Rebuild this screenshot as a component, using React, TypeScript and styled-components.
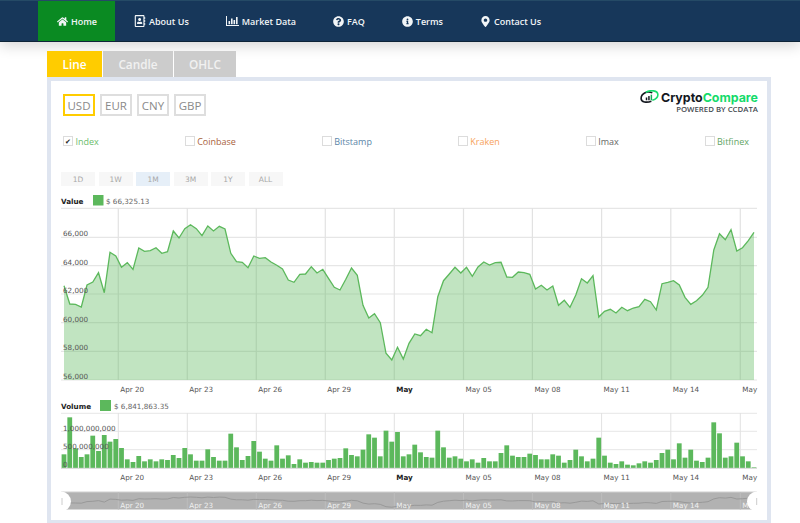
import styled, { createGlobalStyle } from "styled-components";
import {
    FaHome,
    FaRegAddressBook,
    FaQuestionCircle,
    FaInfoCircle,
    FaMapMarkerAlt,
} from "react-icons/fa";

const GlobalStyle = createGlobalStyle`
    html, body {
        margin: 0;
        height: 523px;
        overflow: hidden;
        background: #fff;
        font-family: "Open Sans", "Liberation Sans", sans-serif;
    }
`;

const Header = styled.header`
    height: 40px;
    padding-left: 38px;
    display: flex;
    background: #17375a;
    border-top: 1px solid #254a66;
    border-bottom: 1px solid #0e2438;
    box-shadow: 0 4px 14px rgba(0, 0, 0, 0.16);
`;

const NavItem = styled.a<{ $active?: boolean }>`
    display: flex;
    align-items: center;
    gap: 3px;
    padding: 0 18px 0 19px;
    color: #f2f5f7;
    font-size: 9px;
    font-weight: 600;
    background: ${(p) => (p.$active ? "#0a8a22" : "transparent")};
`;

const Main = styled.main`
    width: 724px;
    margin: 9px 0 0 47px;
`;

const Tabs = styled.div`
    display: flex;
    gap: 1px;
    height: 26px;
`;

const Tab = styled.div<{ $active?: boolean; $width: number }>`
    width: ${(p) => p.$width}px;
    display: flex;
    align-items: center;
    justify-content: center;
    font-size: 11.8px;
    font-weight: 600;
    color: ${(p) => (p.$active ? "#fff" : "#f1f1f1")};
    background: ${(p) => (p.$active ? "#ffcc00" : "#cccccc")};
`;

const Card = styled.section`
    height: 439px;
    border: solid #dfe5f0;
    border-width: 4px 4px 3px;
    background: #fff;
`;

const TopRow = styled.div`
    display: flex;
    justify-content: space-between;
    padding: 13px 9px 0 12px;
`;

const Currencies = styled.div`
    display: flex;
    gap: 5px;
`;

const Currency = styled.div<{ $active?: boolean }>`
    box-sizing: border-box;
    width: 32px;
    height: 22px;
    display: flex;
    align-items: center;
    justify-content: center;
    font-size: 11.5px;
    color: #8a8a8a;
    border: 2px solid ${(p) => (p.$active ? "#ffcc00" : "#dedede")};
`;

const Logo = styled.div`
    display: flex;
    flex-direction: column;
    align-items: flex-end;
    margin-top: -4px;
`;

const LogoMain = styled.div`
    display: flex;
    align-items: center;
    gap: 2px;
    height: 14px;
    font-family: Inter, "Open Sans", sans-serif;
    font-size: 12.4px;
    font-weight: 700;
    color: #14181f;
`;

const LogoGreen = styled.span`
    color: #15db6b;
`;

const LogoSub = styled.div`
    font-size: 7.8px;
    font-weight: 600;
    line-height: 10px;
    color: #444a50;
`;

const Exchanges = styled.div`
    display: flex;
    justify-content: space-between;
    margin: 18px 18px 0 12px;
`;

const Exchange = styled.label<{ $color: string }>`
    display: flex;
    align-items: center;
    gap: 2.5px;
    height: 14px;
    font-size: 9px;
    color: ${(p) => p.$color};
`;

const CheckBox = styled.span`
    box-sizing: border-box;
    width: 10px;
    height: 10px;
    display: flex;
    align-items: center;
    justify-content: center;
    border: 1px solid #dcdcdc;
    font-size: 7px;
    line-height: 1;
    color: #222;
`;

const Ranges = styled.div`
    display: flex;
    gap: 3.5px;
    margin: 24px 0 0 10px;
`;

const RangeButton = styled.div<{ $active?: boolean }>`
    width: 34px;
    height: 14px;
    display: flex;
    align-items: center;
    justify-content: center;
    font-family: "DejaVu Sans", sans-serif;
    font-size: 7.5px;
    color: #a8a8a8;
    background: ${(p) => (p.$active ? "#e6eff8" : "#f7f7f7")};
`;

const ChartSvg = styled.svg`
    display: block;
    margin-top: 4px;
    font-family: "DejaVu Sans", sans-serif;
    font-size: 7.2px;
    fill: #555;
`;

// traced from the reference at 3x, see toLineY / toBarY
const LINE = [
    287, 342, 343, 351, 285, 276, 248, 308, 187, 198, 232, 218, 238, 174, 184, 182, 173, 190, 185, 123, 144,
    116, 104, 116, 137, 108, 123, 109, 117, 190, 215, 217, 233, 198, 205, 203, 216, 226, 237, 270, 277, 253,
    252, 230, 249, 238, 265, 292, 300, 268, 234, 256, 346, 384, 371, 398, 490, 510, 472, 507, 460, 432, 437,
    418, 428, 320, 272, 252, 232, 249, 232, 259, 231, 216, 225, 218, 217, 261, 262, 246, 248, 253, 297, 286,
    300, 288, 346, 331, 352, 315, 266, 279, 257, 381, 364, 358, 369, 352, 362, 354, 350, 328, 335, 360, 281,
    277, 272, 285, 322, 343, 332, 316, 292, 180, 131, 149, 119, 183, 173, 152, 127,
];

const BARS = [
    223, 112, 205, 231, 223, 167, 213, 165, 185, 177, 204, 238, 246, 228, 244, 238, 244, 238, 240, 225, 234,
    204, 223, 242, 242, 208, 231, 242, 242, 161, 202, 240, 228, 183, 215, 236, 242, 196, 236, 226, 252, 238,
    248, 246, 248, 248, 240, 236, 234, 205, 225, 229, 209, 163, 173, 229, 152, 185, 156, 229, 223, 194, 217,
    231, 233, 152, 202, 233, 229, 236, 244, 238, 248, 234, 244, 244, 219, 196, 227, 231, 231, 221, 225, 238,
    238, 223, 227, 248, 240, 209, 229, 244, 236, 173, 227, 248, 252, 244, 254, 256, 250, 244, 248, 240, 219,
    209, 238, 190, 233, 209, 242, 246, 233, 127, 160, 233, 229, 188, 229, 244, 262,
];

const toX = (i: number) => 64 + (i * 690) / 120;
const toLineY = (z: number) => 190 + z / 3;
const toBarY = (z: number) => 380 + z / 3;
const toNavY = (z: number) => 497 + ((toLineY(z) - 225) / 145) * 11;

const linePoints = LINE.map((z, i) => `${toX(i).toFixed(1)},${toLineY(z).toFixed(1)}`).join(" ");
const navPoints = LINE.map((z, i) => `${toX(i).toFixed(1)},${toNavY(z).toFixed(1)}`).join(" ");

const TICKS = [
    { x: 118.3, label: "Apr 20" },
    { x: 187.3, label: "Apr 23" },
    { x: 256.3, label: "Apr 26" },
    { x: 325.3, label: "Apr 29" },
    { x: 394.3, label: "May", bold: true },
    { x: 463.5, label: "May 05" },
    { x: 532.4, label: "May 08" },
    { x: 601.6, label: "May 11" },
    { x: 670.8, label: "May 14" },
    { x: 740.3, label: "May" },
];

const VALUE_GRID = [208.3, 237.3, 265.7, 294, 322.7, 351.3];
const VALUE_LABELS = [
    { y: 236, label: "66,000" },
    { y: 265, label: "64,000" },
    { y: 293, label: "62,000" },
    { y: 322, label: "60,000" },
    { y: 350, label: "58,000" },
    { y: 379, label: "56,000" },
];
const VOLUME_GRID = [413.3, 431.3, 449.7];

function Chart() {
    return (
        <ChartSvg width={716} height={330} viewBox="51 190 716 330">
            <defs>
                <clipPath id="plot">
                    <rect x={61} y={190} width={696} height={330} />
                </clipPath>
            </defs>

            <text x={61} y={204} fontWeight="bold" fill="#222">Value</text>
            <rect x={93} y={195} width={10.5} height={10.5} fill="#5cb85c" />
            <text x={106} y={204} fill="#666">$ 66,325.13</text>

            {VALUE_GRID.map((y) => (
                <line key={y} x1={61} x2={757} y1={y} y2={y} stroke="#e6e6e6" strokeWidth={1.2} />
            ))}
            <line x1={61} x2={757} y1={380} y2={380} stroke="#e6e6e6" strokeWidth={1.2} />
            {TICKS.map((t) => (
                <line key={t.x} x1={t.x} x2={t.x} y1={208} y2={380} stroke="#e2e2e2" strokeWidth={1.2} />
            ))}
            <polygon points={`64,380 ${linePoints} 754,380`} fill="#5cb85c" fillOpacity={0.38} />
            <polyline points={linePoints} fill="none" stroke="#5cb85c" strokeWidth={1.3} />
            {VALUE_LABELS.map((l) => (
                <text key={l.y} x={63} y={l.y}>{l.label}</text>
            ))}
            {TICKS.map((t) => (
                <text key={t.x} x={t.x + 2} y={392} fontWeight={t.bold ? "bold" : "normal"} fill={t.bold ? "#222" : "#555"}>
                    {t.label}
                </text>
            ))}

            <text x={61} y={409} fontWeight="bold" fill="#222">Volume</text>
            <rect x={100} y={400} width={11} height={11} fill="#5cb85c" />
            <text x={114} y={409} fill="#666">$ 6,841,863.35</text>

            {VOLUME_GRID.map((y) => (
                <line key={y} x1={61} x2={757} y1={y} y2={y} stroke="#e6e6e6" strokeWidth={1} />
            ))}
            {TICKS.map((t) => (
                <line key={t.x} x1={t.x} x2={t.x} y1={413} y2={468} stroke="#e2e2e2" strokeWidth={1} />
            ))}
            {BARS.map((z, i) => (
                <rect
                    key={i}
                    x={toX(i) - 2.4}
                    y={toBarY(z)}
                    width={4.8}
                    height={468 - toBarY(z)}
                    fill="#5cb85c"
                />
            ))}
            <line x1={61} x2={757} y1={468.3} y2={468.3} stroke="#d5d5d5" strokeWidth={1} />
            <text x={63} y={430.5}>1,000,000,000</text>
            <text x={63} y={448.5}>500,000,000</text>
            <text x={63} y={467}>0</text>
            {TICKS.map((t) => (
                <text key={t.x} x={t.x + 2} y={480} fontWeight={t.bold ? "bold" : "normal"} fill={t.bold ? "#222" : "#555"}>
                    {t.label}
                </text>
            ))}

            <rect x={61} y={492} width={696} height={17.5} fill="#b2b2b2" />
            <line x1={61} x2={757} y1={492} y2={492} stroke="#cfcfcf" strokeWidth={1} />
            {TICKS.map((t) => (
                <line key={t.x} x1={t.x} x2={t.x} y1={492} y2={509.5} stroke="#bcbcbc" strokeWidth={1} />
            ))}
            <polyline points={navPoints} fill="none" stroke="#999" strokeWidth={1} />
            <g clipPath="url(#plot)">
                {TICKS.map((t) => (
                    <text key={t.x} x={t.x + 2} y={508} fill="#f0f0f0">{t.label}</text>
                ))}
            </g>
            <circle cx={61} cy={501.5} r={10} fill="#fff" />
            <circle cx={757} cy={501.5} r={10} fill="#fff" />
            <line x1={62} x2={62} y1={498} y2={505} stroke="#ccc" strokeWidth={1} />
            <line x1={756.7} x2={756.7} y1={498} y2={505} stroke="#ccc" strokeWidth={1} />
        </ChartSvg>
    );
}

function LogoMark() {
    return (
        <svg width={19} height={14} viewBox="0 0 20 15">
            <path d="M13 3 C 7 0.5, 1 4, 1 9 C 1 13, 7 14, 12 12" fill="none" stroke="#14181f" strokeWidth={1.7} />
            <path d="M6 2.5 C 11 -0.5, 19 0.5, 19 5 C 19 8, 16 10, 13 11" fill="none" stroke="#15db6b" strokeWidth={1.7} />
            <rect x={6} y={8} width={1.6} height={3} fill="#14181f" />
            <rect x={8.6} y={6.5} width={1.6} height={4.5} fill="#14181f" />
            <rect x={11.2} y={5} width={1.6} height={6} fill="#15a85a" />
        </svg>
    );
}

// font awesome 4 style bar chart, the fa5 one in react-icons is horizontal
function BarChartIcon() {
    return (
        <svg width={13} height={10} viewBox="0 0 13 10" fill="currentColor">
            <path d="M0 0h1v9h12v1H0z" />
            <rect x={2.5} y={5} width={1.6} height={3.2} />
            <rect x={5} y={2.5} width={1.6} height={5.7} />
            <rect x={7.5} y={4} width={1.6} height={4.2} />
            <rect x={10} y={1} width={1.6} height={7.2} />
        </svg>
    );
}

const NAV = [
    { label: "Home", icon: <FaHome size={11} />, active: true },
    { label: "About Us", icon: <FaRegAddressBook size={12} /> },
    { label: "Market Data", icon: <BarChartIcon /> },
    { label: "FAQ", icon: <FaQuestionCircle size={11} /> },
    { label: "Terms", icon: <FaInfoCircle size={11} /> },
    { label: "Contact Us", icon: <FaMapMarkerAlt size={11} /> },
];

const EXCHANGES = [
    { label: "Index", color: "#6cbd6c", checked: true },
    { label: "Coinbase", color: "#a9623c" },
    { label: "Bitstamp", color: "#5b86a8" },
    { label: "Kraken", color: "#f7a35c" },
    { label: "Imax", color: "#666666" },
    { label: "Bitfinex", color: "#64a564" },
];

export default function App() {
    return (
        <>
            <GlobalStyle />
            <Header>
                {NAV.map((n) => (
                    <NavItem key={n.label} $active={n.active}>
                        {n.icon}
                        {n.label}
                    </NavItem>
                ))}
            </Header>
            <Main>
                <Tabs>
                    <Tab $active $width={55}>Line</Tab>
                    <Tab $width={70}>Candle</Tab>
                    <Tab $width={62}>OHLC</Tab>
                </Tabs>
                <Card>
                    <TopRow>
                        <Currencies>
                            <Currency $active>USD</Currency>
                            <Currency>EUR</Currency>
                            <Currency>CNY</Currency>
                            <Currency>GBP</Currency>
                        </Currencies>
                        <Logo>
                            <LogoMain>
                                <LogoMark />
                                <span>
                                    Crypto<LogoGreen>Compare</LogoGreen>
                                </span>
                            </LogoMain>
                            <LogoSub>POWERED BY CCDATA</LogoSub>
                        </Logo>
                    </TopRow>
                    <Exchanges>
                        {EXCHANGES.map((e) => (
                            <Exchange key={e.label} $color={e.color}>
                                <CheckBox>{e.checked ? "✔" : ""}</CheckBox>
                                {e.label}
                            </Exchange>
                        ))}
                    </Exchanges>
                    <Ranges>
                        <RangeButton>1D</RangeButton>
                        <RangeButton>1W</RangeButton>
                        <RangeButton $active>1M</RangeButton>
                        <RangeButton>3M</RangeButton>
                        <RangeButton>1Y</RangeButton>
                        <RangeButton>ALL</RangeButton>
                    </Ranges>
                    <Chart />
                </Card>
            </Main>
        </>
    );
}
